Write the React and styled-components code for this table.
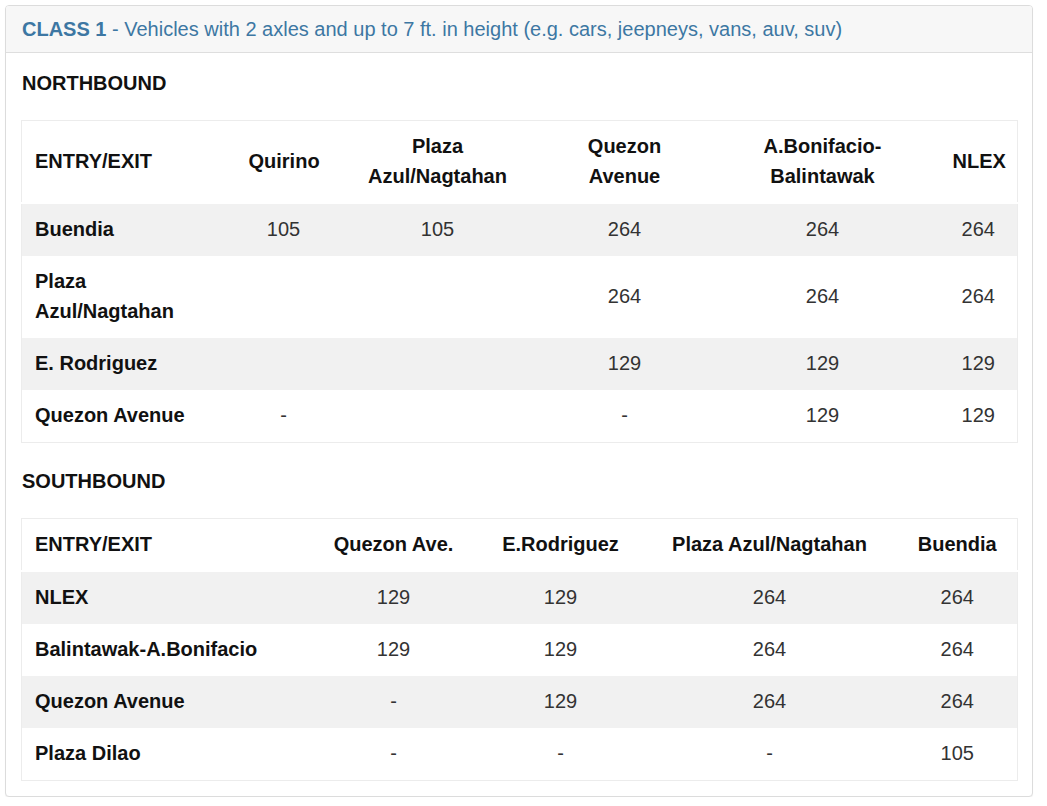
import styled, { createGlobalStyle } from "styled-components";

const GlobalStyle = createGlobalStyle`
  body {
    margin: 0;
    padding: 5px 14px 0 5px;
    background: #fff;
    font-family: "Liberation Sans", Arial, sans-serif;
  }
`;

const northCols = [214, 96, 212, 162, 234, 78];
const northHead = ["ENTRY/EXIT", "Quirino", "Plaza Azul/Nagtahan", "Quezon Avenue", "A.Bonifacio-Balintawak", "NLEX"];
const northRows = [
  ["Buendia", "105", "105", "264", "264", "264"],
  ["Plaza Azul/Nagtahan", "", "", "264", "264", "264"],
  ["E. Rodriguez", "", "", "129", "129", "129"],
  ["Quezon Avenue", "-", "", "-", "129", "129"],
];

const southCols = [286, 172, 162, 256, 120];
const southHead = ["ENTRY/EXIT", "Quezon Ave.", "E.Rodriguez", "Plaza Azul/Nagtahan", "Buendia"];
const southRows = [
  ["NLEX", "129", "129", "264", "264"],
  ["Balintawak-A.Bonifacio", "129", "129", "264", "264"],
  ["Quezon Avenue", "-", "129", "264", "264"],
  ["Plaza Dilao", "-", "-", "-", "105"],
];

const FareTable = ({ cols, head, rows }) => (
  <Table>
    <colgroup>
      {cols.map((w, i) => <col key={i} style={{ width: w }} />)}
    </colgroup>
    <thead>
      <tr>
        {head.map((h, i) => <Th key={i} $first={i === 0}>{h}</Th>)}
      </tr>
    </thead>
    <tbody>
      {rows.map((r, ri) => (
        <Row key={ri} $striped={ri % 2 === 0}>
          {r.map((c, ci) => ci === 0
            ? <RowHead key={ci}>{c}</RowHead>
            : <Td key={ci}>{c}</Td>)}
        </Row>
      ))}
    </tbody>
  </Table>
);

export default function App() {
  return (
    <>
      <GlobalStyle />
      <Panel>
        <PanelHeading>
          <strong>CLASS 1</strong> - Vehicles with 2 axles and up to 7 ft. in height (e.g. cars, jeepneys, vans, auv, suv)
        </PanelHeading>
        <PanelBody>
          <Direction>NORTHBOUND</Direction>
          <FareTable cols={northCols} head={northHead} rows={northRows} />
          <Direction>SOUTHBOUND</Direction>
          <FareTable cols={southCols} head={southHead} rows={southRows} />
        </PanelBody>
      </Panel>
    </>
  );
}

const Panel = styled.div`
  border: 1px solid #dcdcdc;
  border-radius: 4px;
  background: #fff;
  box-shadow: 0 1px 1px rgba(0, 0, 0, 0.05);
`;

const PanelHeading = styled.div`
  padding: 10px 15px 10px 16px;
  background: #f7f7f7;
  border-bottom: 1px solid #dedede;
  border-radius: 3px 3px 0 0;
  color: #3d77a3;
  font-size: 20px;
  line-height: 26px;

  strong {
    font-weight: bold;
  }
`;

const PanelBody = styled.div`
  padding: 15px;
`;

const Direction = styled.h4`
  margin: 23px 0 22px 1px;
  font-size: 20px;
  line-height: 30px;
  font-weight: bold;
  color: #111;

  &:first-child {
    margin-top: 0;
  }
`;

const Table = styled.table`
  width: 100%;
  table-layout: fixed;
  border-collapse: collapse;
  border: 1px solid #ececec;
  font-size: 20px;
  line-height: 30px;
  color: #333;
`;

const Th = styled.th`
  padding: 10px 13px 11px;
  border-bottom: 2px solid #fff;
  text-align: ${(p) => (p.$first ? "left" : "center")};
  font-weight: bold;
  color: #111;
  vertical-align: middle;
`;

const Row = styled.tr`
  background: ${(p) => (p.$striped ? "#f1f1f1" : "#fff")};
`;

const RowHead = styled.td`
  padding: 9.5px 13px 12.5px;
  font-weight: bold;
  color: #111;
  text-align: left;
  vertical-align: middle;
`;

const Td = styled.td`
  padding: 9.5px 13px 12.5px;
  text-align: center;
  vertical-align: middle;
`;
